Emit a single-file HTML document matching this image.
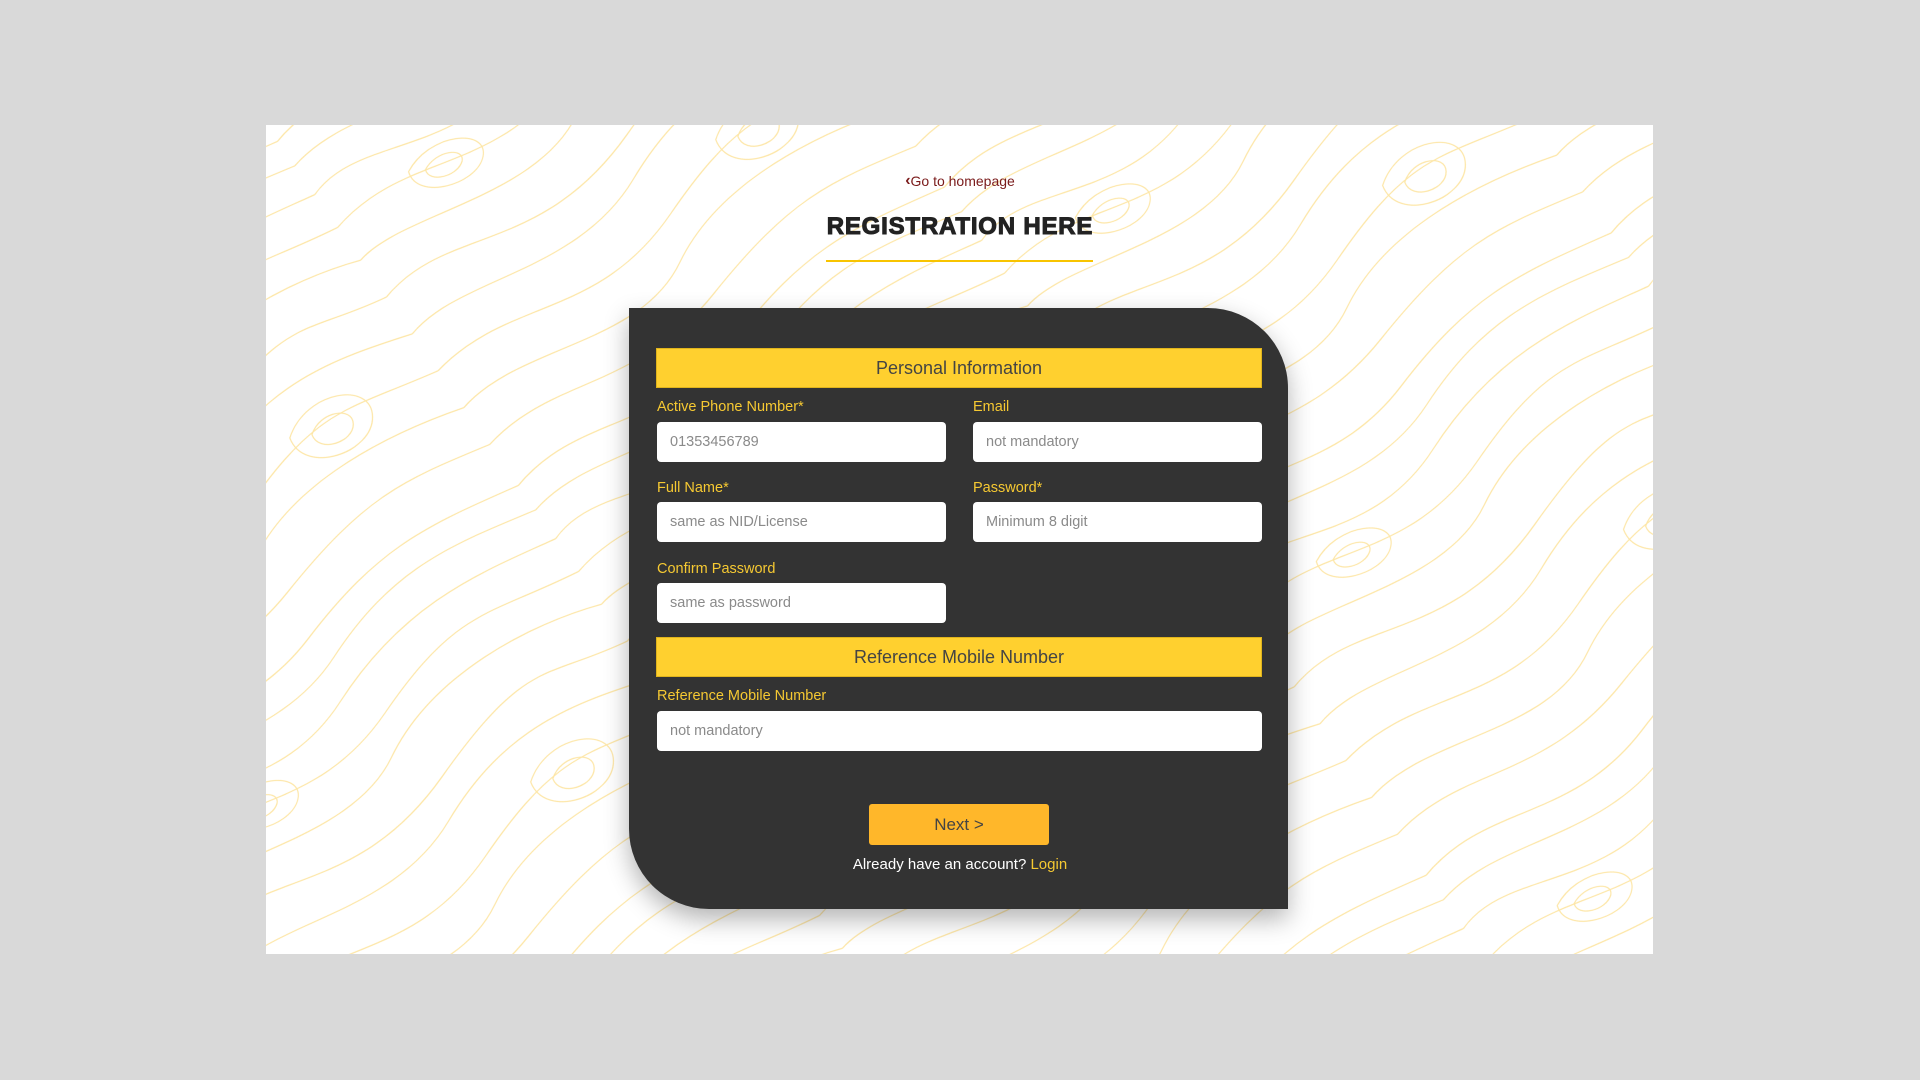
<!DOCTYPE html>
<html><head><meta charset="utf-8"><style>
*{margin:0;padding:0;box-sizing:border-box}
body{width:1920px;height:1080px;background:#d9d9d9;position:relative;overflow:hidden;font-family:"Liberation Sans",Arial,sans-serif}
#panel{position:absolute;left:266px;top:125px;width:1387px;height:829px;background:#fff;overflow:hidden}
#panel svg.bg{position:absolute;left:0;top:0}
.a{position:absolute}
#home{left:0;width:1920px;top:173px;text-align:center;font-size:14px;color:#7a1a1a}
#home b{font-size:16px;font-weight:bold;position:relative;top:-1px}
#title{left:0;width:1920px;top:213px;text-align:center;font-size:24px;font-weight:bold;color:#222;letter-spacing:0.8px;-webkit-text-stroke:1px #222}
#ul{left:826px;top:260px;width:267px;height:2px;background:#f8c400}
#card{left:629px;top:308px;width:659px;height:601px;background:#333;border-radius:0 80px 0 80px;box-shadow:0 10px 25px rgba(0,0,0,.3);overflow:hidden}
.bar{position:absolute;background:#ffd02f;color:#444;font-size:18px;text-align:center;border:1px solid #e0b41c}
.lbl{position:absolute;color:#f6c932;font-size:14.5px;margin-top:2px}
.in{position:absolute;background:#fff;border-radius:4px;color:#8a8a8a;font-size:14.5px;padding-left:13px;display:flex;align-items:center}
#next{left:869px;top:804px;width:180px;height:41px;background:#ffb72a;border-radius:3px;color:#444;font-size:17px;display:flex;align-items:center;justify-content:center}
#already{left:0;width:1920px;top:856px;text-align:center;font-size:15px;color:#fff}
</style></head><body>
<div id="panel">
<svg class="bg" width="1387" height="829">
<defs><pattern id="p" width="520" height="420" patternUnits="userSpaceOnUse" patternTransform="rotate(-35)">
<g fill="none" stroke="#fde6a6" stroke-width="1.2">
<path d="M0 20 C90 -5 150 60 260 25 S420 0 520 20"/>
<path d="M0 50 C80 30 170 95 270 55 S430 30 520 50"/>
<path d="M0 85 C70 60 140 140 250 95 S440 70 520 85"/>
<path d="M0 125 C100 100 160 175 280 130 S420 110 520 125"/>
<path d="M0 165 C60 150 180 215 260 170 S450 140 520 165"/>
<path d="M0 210 C90 185 150 265 290 215 S430 195 520 210"/>
<path d="M0 255 C70 235 170 300 270 255 S440 230 520 255"/>
<path d="M0 300 C100 280 160 350 280 305 S420 280 520 300"/>
<path d="M0 345 C80 325 180 395 260 350 S450 325 520 345"/>
<path d="M0 390 C90 370 150 430 270 395 S430 370 520 390"/>
<path d="M90 120 C130 100 180 130 160 150 C140 170 80 150 90 120Z"/>
<path d="M105 128 C125 118 150 132 140 142 C128 152 100 142 105 128Z"/>
<path d="M360 270 C400 240 460 270 440 300 C420 330 350 310 360 270Z"/>
<path d="M380 280 C400 265 430 280 420 295 C410 310 375 300 380 280Z"/>
</g></pattern></defs>
<rect width="1387" height="829" fill="url(#p)"/>
</svg>
</div>
<div class="a" id="home"><b>&lsaquo;</b>Go to homepage</div>
<div class="a" id="title">REGISTRATION HERE</div>
<div class="a" id="ul"></div>
<div class="a" id="card"></div>
<div class="bar" style="left:656px;top:348px;width:606px;height:40px;line-height:38px">Personal Information</div>
<div class="lbl" style="left:657px;top:397px">Active Phone Number*</div>
<div class="lbl" style="left:973px;top:397px">Email</div>
<div class="in" style="left:657px;top:422px;width:289px;height:40px">01353456789</div>
<div class="in" style="left:973px;top:422px;width:289px;height:40px">not mandatory</div>
<div class="lbl" style="left:657px;top:478px">Full Name*</div>
<div class="lbl" style="left:973px;top:478px">Password*</div>
<div class="in" style="left:657px;top:502px;width:289px;height:40px">same as NID/License</div>
<div class="in" style="left:973px;top:502px;width:289px;height:40px">Minimum 8 digit</div>
<div class="lbl" style="left:657px;top:559px">Confirm Password</div>
<div class="in" style="left:657px;top:583px;width:289px;height:40px">same as password</div>
<div class="bar" style="left:656px;top:637px;width:606px;height:40px;line-height:38px">Reference Mobile Number</div>
<div class="lbl" style="left:657px;top:686px">Reference Mobile Number</div>
<div class="in" style="left:657px;top:711px;width:605px;height:40px">not mandatory</div>
<div class="a" id="next">Next &gt;</div>
<div class="a" id="already">Already have an account? <span style="color:#f6c932">Login</span></div>
</body></html>
